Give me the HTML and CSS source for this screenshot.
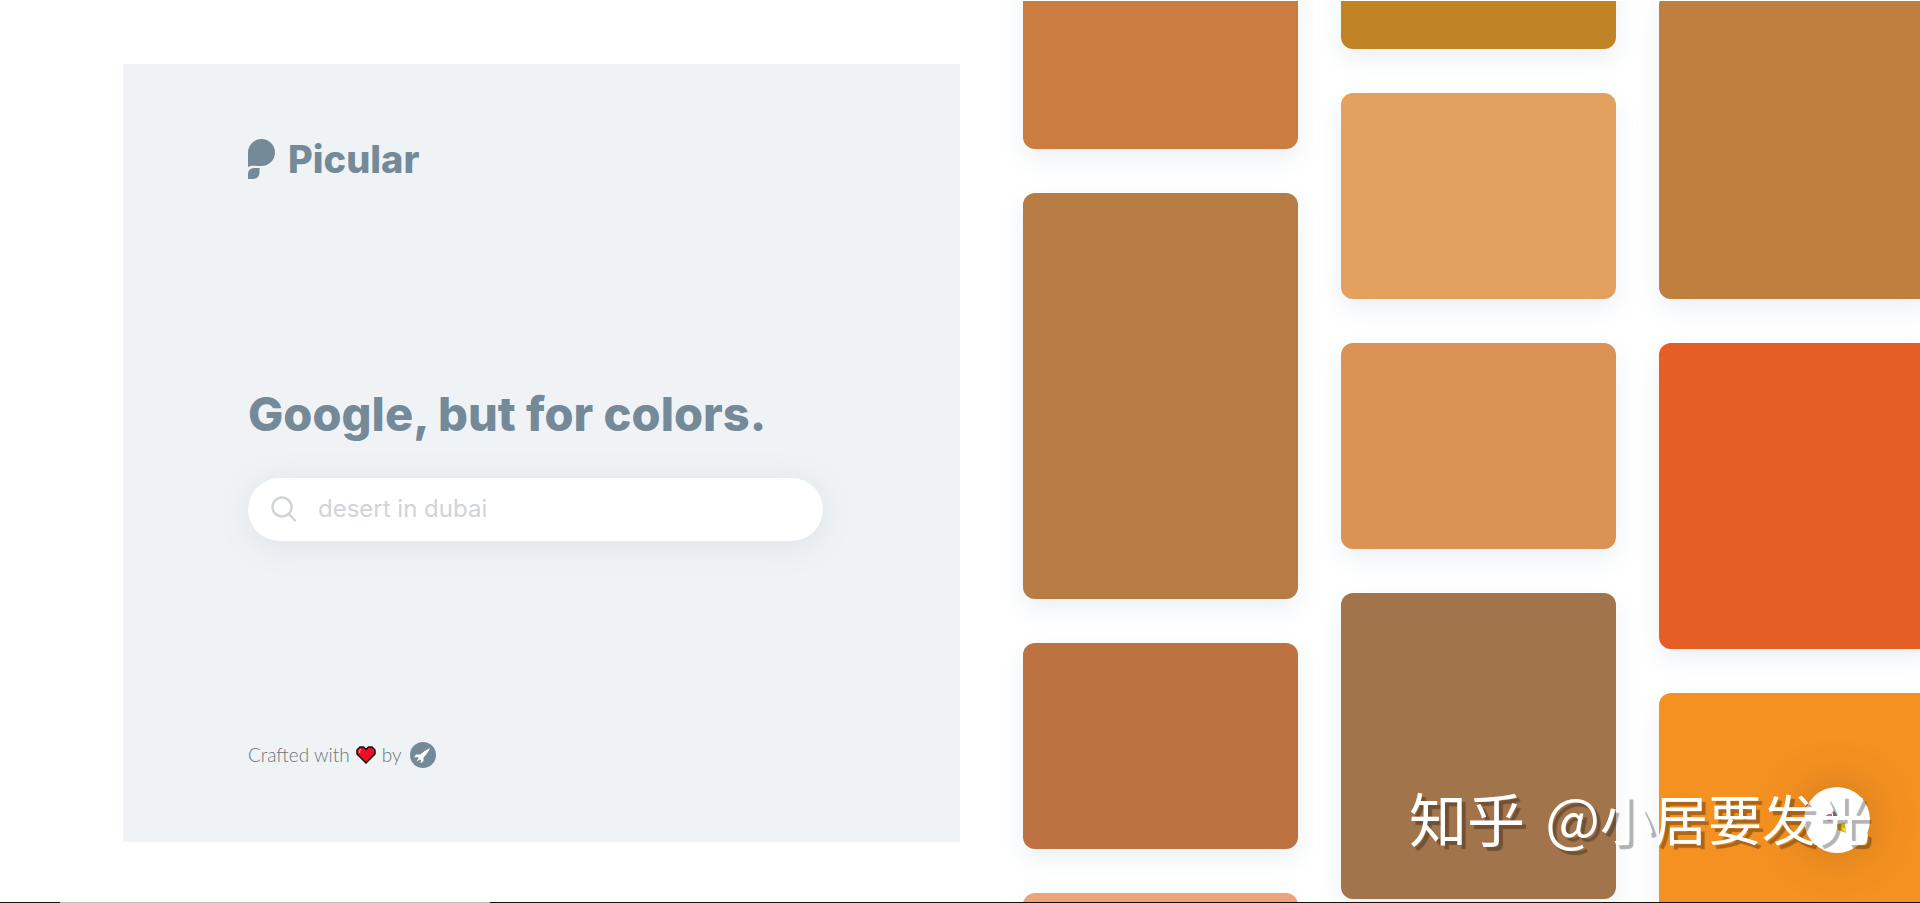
FILE: index.html
```html
<!DOCTYPE html>
<html lang="en">
<head>
  <meta charset="UTF-8">
  <meta name="viewport" content="width=device-width, initial-scale=1.0">
  <title>Picular</title>
  <link rel="stylesheet" href="styles.css">
</head>
<body>
  <main class="page">
    <section class="intro">
      <div class="card">
        <a class="logo" href="#">
          <svg class="logo-mark" viewBox="0 0 28 41" aria-hidden="true">
            <path d="M0 28V13.500A13.500 13.500 0 1 1 13.500 27C8 27 3 26 0 28Z"/>
            <path d="M0 40V35C0 31 3 29 6.500 29H11.500V33C11.500 38 8 40 5 40Z"/>
          </svg>
          <span>Picular</span>
        </a>

        <form class="search">
          <h1><label for="query">Google, but for colors.</label></h1>
          <div class="search-box">
            <svg class="search-icon" viewBox="0 0 26 26" aria-hidden="true">
              <circle cx="11" cy="11" r="9.500"/>
              <path d="M18 18L24 24.500"/>
            </svg>
            <input id="query" type="text" placeholder="desert in dubai">
          </div>
        </form>

        <footer class="credit">
          <span>Crafted with</span>
          <svg class="heart" viewBox="0 0 20 18" aria-hidden="true">
            <path d="M10 17L1 8V4L4 1H7.500L10 3.500L12.500 1H16L19 4V8Z"/>
            <path class="shine" d="M3.500 7V4.500L5 3.500"/>
          </svg>
          <span>by</span>
          <a class="maker" href="#" aria-label="Maker">
            <svg viewBox="0 0 26 26" aria-hidden="true">
              <circle cx="13" cy="13" r="13"/>
              <path d="M20 6C16 8 13 10 10.500 12.500L6 12.500L4 15.500L8 15L8.500 16L6.500 19.500L10 17.500L11 18L10.500 21.500L13.500 19L13.500 15.500C16 13 18.500 10 20 6Z"/>
            </svg>
          </a>
        </footer>
      </div>
    </section>

    <section class="palette">
      <div class="column column-first">
        <div class="tile small copper"></div>
        <div class="tile large bronze"></div>
        <div class="tile small rust"></div>
        <div class="tile small salmon"></div>
      </div>
      <div class="column column-second">
        <div class="tile small gold"></div>
        <div class="tile small sand"></div>
        <div class="tile small amber"></div>
        <div class="tile medium brown"></div>
      </div>
      <div class="column column-third">
        <div class="tile medium ochre"></div>
        <div class="tile medium flame"></div>
        <div class="tile medium orange"></div>
      </div>
    </section>
  </main>

  <button class="chat" type="button" aria-label="Surprise me">
    <svg viewBox="0 0 24 30" aria-hidden="true">
      <path d="M6 3L12 12" stroke="#8d9299" stroke-width="2"/>
      <path d="M8 8L13 14L9 15Z" fill="#686b70"/>
      <path d="M7 10Q1 10 2 13Q4 16 8 13" stroke="#cf6577" stroke-width="2.500" fill="none"/>
      <path d="M12 19L20 18L21 28L13 25Z" fill="#d9ad12"/>
      <path d="M16 22L21 24V29Z" fill="#f7d84a"/>
    </svg>
  </button>

  <p class="watermark" lang="zh">
    <span class="watermark-site">知乎</span>
    <span><span class="watermark-site">@</span>小居要发光</span>
  </p>
  <div class="bottom-bar"></div>
</body>
</html>
```
FILE: styles.css
```css
* {
  box-sizing: border-box;
}

body {
  margin: 0;
  background: #fff;
  color: #758a99;
  font-family: Inter, "Liberation Sans", sans-serif;
  overflow: hidden;
}

.page {
  display: flex;
  height: 100vh;
  border-top: 1px solid #fffefa;
}

/* left side */
.intro {
  flex: 0 0 50%;
  display: flex;
  padding: 63px 0 61px 123px;
}

.card {
  flex: 1;
  display: flex;
  flex-direction: column;
  justify-content: space-between;
  padding: 75px 137px 74px 125px;
  background: #eff3f6;
}

.logo {
  display: flex;
  align-items: center;
  gap: 12px;
  color: #758a99;
  font-size: 38px;
  font-weight: 800;
  line-height: 41px;
  text-decoration: none;
}

.logo-mark {
  width: 28px;
  height: 41px;
  fill: #758a99;
}

h1 {
  margin: 0 0 32px;
  font-size: 47px;
  font-weight: 800;
  line-height: 64px;
  white-space: nowrap;
}

.search-box {
  display: flex;
  align-items: center;
  gap: 21px;
  height: 63px;
  padding: 0 23px;
  border-radius: 32px;
  background: #fff;
  box-shadow: 0 4px 32px rgba(117, 138, 153, 0.14);
}

.search-icon {
  flex: none;
  width: 26px;
  height: 26px;
  fill: none;
  stroke: #d0d4d8;
  stroke-width: 2.5;
  stroke-linecap: round;
}

.search-box input {
  flex: 1;
  min-width: 0;
  padding: 0;
  border: 0;
  outline: 0;
  background: none;
  color: #758a99;
  font: 400 24px/32px Inter, sans-serif;
}

.search-box input::placeholder {
  color: #d0d4d8;
  opacity: 1;
}

.credit {
  display: flex;
  align-items: center;
  gap: 6px;
  color: #6b7378;
  font-family: Lato, sans-serif;
  font-size: 19px;
  font-weight: 300;
  line-height: 26px;
}

.heart {
  width: 20px;
  height: 18px;
  fill: #e81224;
  stroke: #1f0b0d;
  stroke-width: 1.5;
}

.heart .shine {
  fill: none;
  stroke: #ff7d86;
}

.maker {
  display: flex;
  margin-left: 3px;
}

.maker svg {
  width: 26px;
  height: 26px;
  fill: #758a99;
}

.maker path {
  fill: #fff;
}

/* right side */
.palette {
  flex: 1;
  display: flex;
  gap: 43px;
  padding-left: 63px;
  overflow: hidden;
}

.column {
  flex: none;
  display: flex;
  flex-direction: column;
  gap: 44px;
  width: 275px;
}

.column-first {
  margin-top: -58px;
}

.column-second {
  margin-top: -158px;
}

.column-third {
  margin-top: -8px;
}

.tile {
  flex: none;
  border-radius: 12px;
  box-shadow: 0 10px 24px rgba(117, 150, 180, 0.14);
}

.small { height: 206px; }
.medium { height: 306px; }
.large { height: 406px; }

.copper { background: #cb7c3f; }
.bronze { background: #b67c43; }
.rust { background: #bc7241; }
.salmon { background: #eca27a; }
.gold { background: #c08325; }
.sand { background: #e2a15e; }
.amber { background: #da9354; }
.brown { background: #a2744b; }
.ochre { background: #be7f3f; }
.flame { background: #e55e25; }
.orange { background: #f59121; }

/* things floating over the page */
.chat {
  position: fixed;
  right: 50px;
  bottom: 50px;
  display: flex;
  align-items: center;
  justify-content: center;
  width: 66px;
  height: 66px;
  padding: 0;
  border: 0;
  border-radius: 50%;
  background: #fff;
  box-shadow: 0 0 50px rgba(90, 60, 20, 0.3);
}

.chat svg {
  width: 24px;
  height: 30px;
}

.watermark {
  position: fixed;
  right: 50px;
  bottom: 43px;
  display: flex;
  align-items: center;
  gap: 20px;
  margin: 0;
  color: #fff;
  font-family: "Noto Sans CJK SC", sans-serif;
  font-size: 54px;
  line-height: 84px;
  white-space: nowrap;
  text-shadow: 4px 4px 1px rgba(0, 0, 0, 0.3);
  pointer-events: none;
}

.watermark-site {
  font-size: 58px;
}

.bottom-bar {
  position: fixed;
  right: 0;
  bottom: 0;
  left: 0;
  height: 1px;
  background: linear-gradient(to right, #111 60px, #bbb 60px, #bbb 490px, #111 490px);
}
```
